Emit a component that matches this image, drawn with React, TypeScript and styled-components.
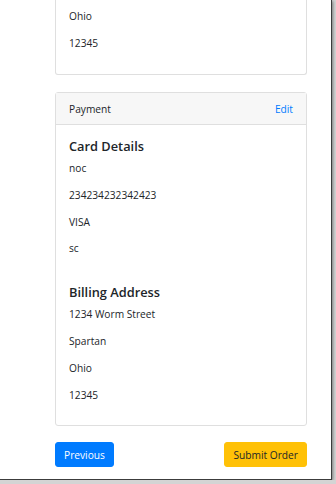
import React from "react";
import styled, { createGlobalStyle } from "styled-components";

const GlobalStyle = createGlobalStyle`
  html, body {
    margin: 0;
    padding: 0;
    background: #d4d4d4;
  }
  body {
    font-family: 'Open Sans', 'Noto Sans', sans-serif;
    color: #212529;
  }
  * { box-sizing: border-box; }
`;

const Card = ({ top, children }: { top?: boolean; children: React.ReactNode }) => (
  <CardBox $cut={top}>{children}</CardBox>
);

export default () => (
  <>
    <GlobalStyle />
    <Shell>
      <Page>
        <Card top>
          <CardBody $cut>
            <Line>Ohio</Line>
            <Line>12345</Line>
          </CardBody>
        </Card>
        <Card>
          <CardHeader>
            <span>Payment</span>
            <EditLink href="#">Edit</EditLink>
          </CardHeader>
          <CardBody>
            <SectionTitle>Card Details</SectionTitle>
            <Line>noc</Line>
            <Line>234234232342423</Line>
            <Line>VISA</Line>
            <Line>sc</Line>
            <SectionTitle $spaced>Billing Address</SectionTitle>
            <Line>1234 Worm Street</Line>
            <Line>Spartan</Line>
            <Line>Ohio</Line>
            <Line>12345</Line>
          </CardBody>
        </Card>
        <Actions>
          <Button $variant="primary">Previous</Button>
          <Button $variant="warning">Submit Order</Button>
        </Actions>
      </Page>
    </Shell>
  </>
);

const Shell = styled.div`
  width: 332px;
  height: 480px;
  background: #fff;
  border-right: 1px solid #3c3c3c;
  border-bottom: 1px solid #3c3c3c;
  box-shadow: 1px 1px 3px rgba(0, 0, 0, 0.45);
  overflow: hidden;
`;

const Page = styled.div`
  width: 252px;
  margin-left: 55px;
`;

const CardBox = styled.div<{ $cut?: boolean }>`
  background: #fff;
  border: 1px solid #dfdfdf;
  border-top: ${(p) => (p.$cut ? "none" : "1px solid #dfdfdf")};
  border-radius: ${(p) => (p.$cut ? "0 0 3px 3px" : "3px")};
  margin-bottom: 17px;

  & + & {
    margin-bottom: 16px;
  }
`;

const CardHeader = styled.div`
  display: flex;
  justify-content: space-between;
  align-items: center;
  height: 32px;
  padding: 0 13px;
  background: #f7f7f7;
  border-bottom: 1px solid #dfdfdf;
  font-size: 10.2px;
  line-height: 16px;
`;

const EditLink = styled.a`
  color: #007bff;
  text-decoration: none;
`;

const CardBody = styled.div<{ $cut?: boolean }>`
  padding: ${(p) => (p.$cut ? "8px 13px 13px" : "13px 13px 12px")};
`;

const SectionTitle = styled.h5<{ $spaced?: boolean }>`
  margin: ${(p) => (p.$spaced ? "28px 0 5px" : "0 0 5px")};
  font-size: 12.8px;
  font-weight: 600;
  line-height: 17px;
`;

const Line = styled.p`
  margin: 0 0 10.7px;
  font-size: 10.2px;
  line-height: 16px;
`;

const Actions = styled.div`
  display: flex;
  justify-content: space-between;
`;

const Button = styled.button<{ $variant: "primary" | "warning" }>`
  height: 25px;
  padding: 0 8px;
  border: 1px solid ${(p) => (p.$variant === "primary" ? "#007bff" : "#ffc107")};
  border-radius: 3px;
  background: ${(p) => (p.$variant === "primary" ? "#007bff" : "#ffc107")};
  color: ${(p) => (p.$variant === "primary" ? "#fff" : "#212529")};
  font-family: 'Open Sans', 'Noto Sans', sans-serif;
  font-size: 10.2px;
  line-height: 16px;
`;
